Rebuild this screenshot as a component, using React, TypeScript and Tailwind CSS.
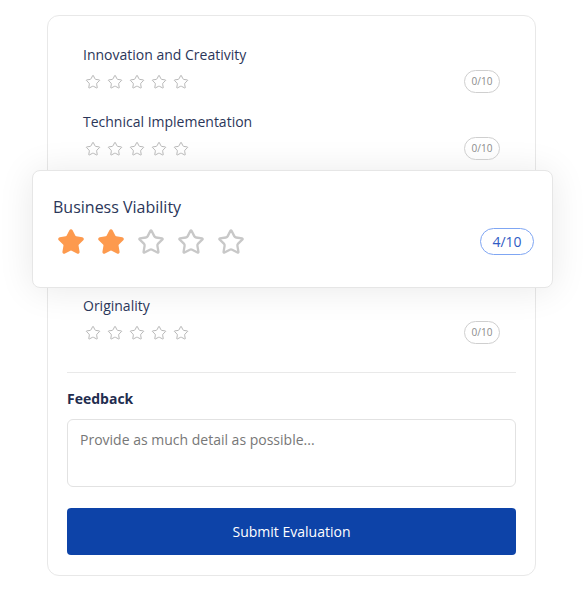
import { Star } from 'lucide-react';

type Criterion = { name: string; score: number };

const criteria: Criterion[] = [
    { name: 'Innovation and Creativity', score: 0 },
    { name: 'Technical Implementation', score: 0 },
    { name: 'Business Viability', score: 4 },
    { name: 'Originality', score: 0 },
];

function SmallRow({ c }: { c: Criterion }) {
    return (
        <div className="px-4">
            <p className="text-sm leading-5 text-[#2b3659]">{c.name}</p>
            <div className="mt-[5px] flex h-[23px] items-center justify-between">
                <div className="flex gap-[6px] pl-[2px]">
                    {[0, 1, 2, 3, 4].map((i) => (
                        <Star key={i} size={16} strokeWidth={1.5} className="text-[#b8b8b8]" />
                    ))}
                </div>
                <span className="flex h-[23px] w-[36px] items-center justify-center rounded-full border border-[#cfcfcf] text-[10px] text-[#8a8a8a]">
                    {c.score}/10
                </span>
            </div>
        </div>
    );
}

function ActiveRow({ c }: { c: Criterion }) {
    const filled = Math.round(c.score / 2);
    return (
        <div className="-ml-[35px] -mr-[37px] mt-[10px] rounded-lg border border-[#e6e6e6] bg-white pb-[32px] pl-5 pr-[18px] pt-6 shadow-[0_2px_36px_rgba(0,0,0,0.09)]">
            <p className="text-base leading-6 text-[#2b3659]">{c.name}</p>
            <div className="mt-[9px] flex h-[27px] items-center justify-between">
                <div className="flex gap-3 pl-[4px]">
                    {[0, 1, 2, 3, 4].map((i) =>
                        i < filled ? (
                            <Star key={i} size={28} strokeWidth={2} className="fill-[#fd9a4e] text-[#fd9a4e]" />
                        ) : (
                            <Star key={i} size={28} strokeWidth={2} className="text-[#c8c8c8]" />
                        )
                    )}
                </div>
                <span className="flex h-[27px] w-[54px] items-center justify-center rounded-full border border-[#7fa6f3] text-sm text-[#2f5bc4]">
                    {c.score}/10
                </span>
            </div>
        </div>
    );
}

export default function App() {
    return (
        <div className="min-h-[592px] bg-white pt-[15px] font-['Open_Sans',sans-serif]">
            <div className="ml-[47px] w-[489px] rounded-xl border border-[#e8e8e8] bg-white px-[19px] pb-5 pt-[29px]">
                <SmallRow c={criteria[0]} />
                <div className="mt-[19px]">
                    <SmallRow c={criteria[1]} />
                </div>
                <ActiveRow c={criteria[2]} />
                <div className="mt-2">
                    <SmallRow c={criteria[3]} />
                </div>
                <div className="mt-7 h-px bg-[#e9e9e9]" />
                <p className="mt-4 text-sm font-bold leading-5 text-[#1f2d4f]">Feedback</p>
                <textarea
                    placeholder="Provide as much detail as possible..."
                    className="mt-[10px] block h-[68px] w-full resize-none rounded-md border border-[#e2e2e2] px-3 py-[10px] text-sm leading-5 text-[#333] outline-none placeholder:text-[#777]"
                />
                <button
                    type="button"
                    className="mt-[21px] flex h-[47px] w-full items-center justify-center rounded bg-[#0d43a8] text-sm text-white"
                >
                    Submit Evaluation
                </button>
            </div>
        </div>
    );
}
